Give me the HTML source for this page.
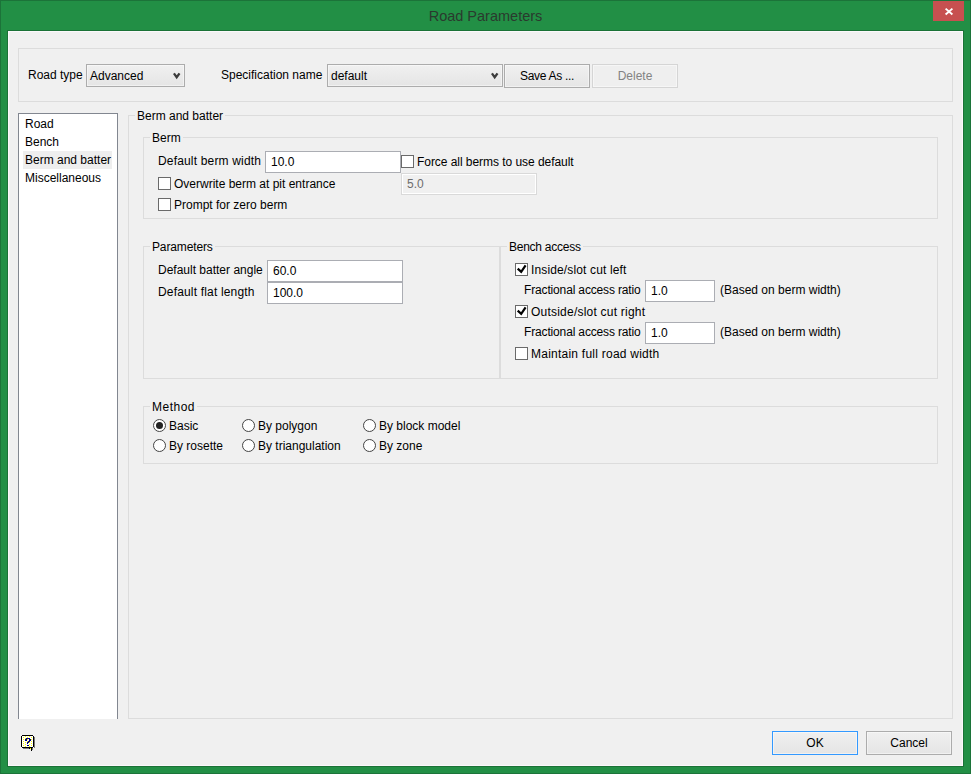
<!DOCTYPE html>
<html><head><meta charset="utf-8">
<style>
html,body{margin:0;padding:0}
body{width:971px;height:774px;position:relative;overflow:hidden;background:#228f45;font-family:"Liberation Sans",sans-serif;font-size:12px;color:#000}
div{box-sizing:border-box}
.a{position:absolute}
.t{position:absolute;white-space:nowrap;line-height:16px;font-size:12px}
.frame{position:absolute;left:0;top:0;width:971px;height:774px;border:1px solid #1c7339}
.content{position:absolute;left:7px;top:30px;width:957px;height:737px;border:1px solid #1a7236;}
.content2{position:absolute;left:8px;top:31px;width:955px;height:735px;border:1px solid #fbf8fb;background:#f0f0f0}
.close{position:absolute;left:933px;top:1px;width:31px;height:20px;background:#c75050}
.grp{position:absolute;border:1px solid #dcdcdc}
.gt{position:absolute;white-space:nowrap;line-height:16px;font-size:12px;background:#f0f0f0;padding:0 2px}
.edit{position:absolute;border:1px solid #abadb3;background:#fff}
.cb{position:absolute;width:13px;height:13px;border:1px solid #6a6a6a;background:#fff}
.rb{position:absolute;width:13px;height:13px;border:1px solid #444;border-radius:50%;background:#fff}
.btn{position:absolute;border:1px solid #acacac;background:linear-gradient(#f0f0f0,#e5e5e5);box-shadow:inset 0 0 0 1px rgba(255,255,255,.45)}
.combo{position:absolute;border:1px solid #acacac;background:linear-gradient(#f0f0f0,#e5e5e5);box-shadow:inset 0 0 0 1px rgba(255,255,255,.45)}
</style></head><body>
<div class="frame"></div>
<div class="t" style="left:0;width:971px;top:7px;text-align:center;font-size:14.5px;line-height:18px;color:#2a3a2e">Road Parameters</div>
<div class="close"><svg width="31" height="20" style="position:absolute;left:0;top:0"><path d="M12.6 7.6 L19.4 13.5 M19.4 7.6 L12.6 13.5" stroke="#fff" stroke-width="1.9"/></svg></div>
<div class="content"></div>
<div class="content2"></div>

<!-- top group -->
<div class="grp" style="left:18px;top:48px;width:935px;height:54px"></div>
<div class="t" style="left:28px;top:67px">Road type</div>
<div class="combo" style="left:86px;top:64px;width:99px;height:23px"></div>
<div class="t" style="left:90px;top:68px">Advanced</div>
<svg class="a" style="left:173px;top:72px" width="9" height="8"><polyline points="0.9,1.4 3.7,5.2 6.5,1.4" stroke="#3c3c3c" stroke-width="2.3" fill="none"/></svg>
<div class="t" style="left:221px;top:67px">Specification name</div>
<div class="combo" style="left:327px;top:64px;width:176px;height:23px"></div>
<div class="t" style="left:331px;top:68px">default</div>
<svg class="a" style="left:491px;top:72px" width="9" height="8"><polyline points="0.9,1.4 3.7,5.2 6.5,1.4" stroke="#3c3c3c" stroke-width="2.3" fill="none"/></svg>
<div class="btn" style="left:504px;top:64px;width:86px;height:24px"></div>
<div class="t" style="left:504px;width:86px;text-align:center;top:68px;letter-spacing:-0.3px">Save As ...</div>
<div class="btn" style="left:592px;top:64px;width:86px;height:24px;border-color:#d5d5d5;background:#efefef"></div>
<div class="t" style="left:592px;width:86px;text-align:center;top:68px;color:#838383">Delete</div>

<!-- list -->
<div class="a" style="left:18px;top:113px;width:100px;height:606px;background:#fff;border:1px solid #828790;border-bottom:none"></div>
<div class="a" style="left:23px;top:151px;width:89px;height:18px;background:#eeeeee"></div>
<div class="t" style="left:25px;top:116px">Road</div>
<div class="t" style="left:25px;top:134px">Bench</div>
<div class="t" style="left:25px;top:152px">Berm and batter</div>
<div class="t" style="left:25px;top:170px">Miscellaneous</div>

<!-- main panel -->
<div class="grp" style="left:128px;top:115px;width:825px;height:604px"></div>
<div class="gt" style="left:135px;top:108px">Berm and batter</div>

<!-- Berm -->
<div class="grp" style="left:143px;top:137px;width:795px;height:82px"></div>
<div class="gt" style="left:150px;top:130px">Berm</div>
<div class="t" style="left:158px;top:153px;letter-spacing:0.17px">Default berm width</div>
<div class="edit" style="left:265px;top:151px;width:136px;height:22px"></div>
<div class="t" style="left:271px;top:154px">10.0</div>
<div class="cb" style="left:401px;top:155px"></div>
<div class="t" style="left:417px;top:154px;letter-spacing:-0.05px">Force all berms to use default</div>
<div class="cb" style="left:158px;top:177px"></div>
<div class="t" style="left:174px;top:176px">Overwrite berm at pit entrance</div>
<div class="edit" style="left:401px;top:173px;width:136px;height:22px;background:#f0f0f0;border-color:#d9d9d9;box-shadow:inset 0 0 0 1px #fff"></div>
<div class="t" style="left:407px;top:176px;color:#6d6d6d">5.0</div>
<div class="cb" style="left:158px;top:198px"></div>
<div class="t" style="left:174px;top:197px">Prompt for zero berm</div>

<!-- Parameters -->
<div class="grp" style="left:143px;top:246px;width:357px;height:133px"></div>
<div class="gt" style="left:150px;top:239px;letter-spacing:-0.13px">Parameters</div>
<div class="t" style="left:158px;top:262px">Default batter angle</div>
<div class="edit" style="left:267px;top:260px;width:136px;height:22px"></div>
<div class="t" style="left:273px;top:263px">60.0</div>
<div class="t" style="left:158px;top:284px;letter-spacing:0.17px">Default flat length</div>
<div class="edit" style="left:267px;top:282px;width:136px;height:22px"></div>
<div class="t" style="left:273px;top:285px">100.0</div>

<!-- Bench access -->
<div class="grp" style="left:500px;top:246px;width:438px;height:133px"></div>
<div class="gt" style="left:507px;top:239px;letter-spacing:-0.25px">Bench access</div>
<div class="cb" style="left:515px;top:263px"></div><svg class="a" style="left:515px;top:263px" width="13" height="13"><path d="M2.7 5.6 L6.2 8.8 L10.6 2.3" stroke="#000" stroke-width="2.2" fill="none"/></svg>
<div class="t" style="left:531px;top:262px;letter-spacing:0.14px">Inside/slot cut left</div>
<div class="t" style="left:524px;top:282px;letter-spacing:-0.15px">Fractional access ratio</div>
<div class="edit" style="left:645px;top:280px;width:70px;height:22px"></div>
<div class="t" style="left:651px;top:283px">1.0</div>
<div class="t" style="left:720px;top:282px">(Based on berm width)</div>
<div class="cb" style="left:515px;top:305px"></div><svg class="a" style="left:515px;top:305px" width="13" height="13"><path d="M2.7 5.6 L6.2 8.8 L10.6 2.3" stroke="#000" stroke-width="2.2" fill="none"/></svg>
<div class="t" style="left:531px;top:304px;letter-spacing:0.22px">Outside/slot cut right</div>
<div class="t" style="left:524px;top:324px;letter-spacing:-0.15px">Fractional access ratio</div>
<div class="edit" style="left:645px;top:322px;width:70px;height:22px"></div>
<div class="t" style="left:651px;top:325px">1.0</div>
<div class="t" style="left:720px;top:324px">(Based on berm width)</div>
<div class="cb" style="left:515px;top:347px"></div>
<div class="t" style="left:531px;top:346px;letter-spacing:0.24px">Maintain full road width</div>

<!-- Method -->
<div class="grp" style="left:143px;top:406px;width:795px;height:58px"></div>
<div class="gt" style="left:150px;top:399px;letter-spacing:0.5px">Method</div>
<div class="rb" style="left:153px;top:419px"></div><div class="a" style="left:156px;top:422px;width:7px;height:7px;border-radius:50%;background:#222"></div>
<div class="t" style="left:169px;top:418px">Basic</div>
<div class="rb" style="left:242px;top:419px"></div>
<div class="t" style="left:258px;top:418px">By polygon</div>
<div class="rb" style="left:363px;top:419px"></div>
<div class="t" style="left:379px;top:418px">By block model</div>
<div class="rb" style="left:153px;top:439px"></div>
<div class="t" style="left:169px;top:438px">By rosette</div>
<div class="rb" style="left:242px;top:439px"></div>
<div class="t" style="left:258px;top:438px">By triangulation</div>
<div class="rb" style="left:363px;top:439px"></div>
<div class="t" style="left:379px;top:438px">By zone</div>

<!-- bottom -->
<svg class="a" style="left:18px;top:732px" width="18" height="20" shape-rendering="crispEdges"><rect x="4" y="4" width="11" height="11" fill="#fff"/><rect x="4" y="3" width="11" height="1" fill="#000"/><rect x="3" y="4" width="1" height="11" fill="#000"/><rect x="15" y="4" width="1" height="11" fill="#000"/><rect x="4" y="15" width="7" height="1" fill="#000"/><rect x="16" y="5" width="1" height="11" fill="#7a7a7a"/><rect x="5" y="16" width="6" height="1" fill="#7a7a7a"/><rect x="11" y="15" width="1" height="1" fill="#000"/><rect x="12" y="15" width="1" height="1" fill="#000"/><rect x="13" y="15" width="1" height="1" fill="#000"/><rect x="14" y="15" width="1" height="1" fill="#000"/><rect x="11" y="16" width="1" height="1" fill="#000"/><rect x="12" y="16" width="1" height="1" fill="#ffff00"/><rect x="13" y="16" width="1" height="1" fill="#000"/><rect x="13" y="17" width="1" height="1" fill="#000"/><rect x="13" y="18" width="1" height="1" fill="#000"/><rect x="14" y="16" width="1" height="1" fill="#7a7a7a"/><rect x="14" y="17" width="1" height="1" fill="#7a7a7a"/><rect x="5" y="5" width="1" height="1" fill="#ffff00"/><rect x="5" y="7" width="1" height="1" fill="#ffff00"/><rect x="5" y="9" width="1" height="1" fill="#ffff00"/><rect x="5" y="11" width="1" height="1" fill="#ffff00"/><rect x="5" y="13" width="1" height="1" fill="#ffff00"/><rect x="9" y="5" width="1" height="1" fill="#ffff00"/><rect x="9" y="7" width="1" height="1" fill="#ffff00"/><rect x="9" y="9" width="1" height="1" fill="#ffff00"/><rect x="9" y="11" width="1" height="1" fill="#ffff00"/><rect x="9" y="13" width="1" height="1" fill="#ffff00"/><rect x="13" y="5" width="1" height="1" fill="#ffff00"/><rect x="13" y="7" width="1" height="1" fill="#ffff00"/><rect x="13" y="9" width="1" height="1" fill="#ffff00"/><rect x="13" y="11" width="1" height="1" fill="#ffff00"/><rect x="13" y="13" width="1" height="1" fill="#ffff00"/><rect x="7" y="4" width="1" height="1" fill="#ffff00"/><rect x="7" y="6" width="1" height="1" fill="#ffff00"/><rect x="7" y="8" width="1" height="1" fill="#ffff00"/><rect x="7" y="10" width="1" height="1" fill="#ffff00"/><rect x="7" y="12" width="1" height="1" fill="#ffff00"/><rect x="7" y="14" width="1" height="1" fill="#ffff00"/><rect x="11" y="4" width="1" height="1" fill="#ffff00"/><rect x="11" y="6" width="1" height="1" fill="#ffff00"/><rect x="11" y="8" width="1" height="1" fill="#ffff00"/><rect x="11" y="10" width="1" height="1" fill="#ffff00"/><rect x="11" y="12" width="1" height="1" fill="#ffff00"/><rect x="11" y="14" width="1" height="1" fill="#ffff00"/><rect x="8" y="6" width="1" height="1" fill="#000080"/><rect x="9" y="6" width="1" height="1" fill="#000080"/><rect x="10" y="6" width="1" height="1" fill="#000080"/><rect x="11" y="6" width="1" height="1" fill="#000080"/><rect x="7" y="7" width="1" height="1" fill="#000080"/><rect x="8" y="7" width="1" height="1" fill="#000080"/><rect x="11" y="7" width="1" height="1" fill="#000080"/><rect x="12" y="7" width="1" height="1" fill="#000080"/><rect x="7" y="8" width="1" height="1" fill="#000080"/><rect x="8" y="8" width="1" height="1" fill="#000080"/><rect x="11" y="8" width="1" height="1" fill="#000080"/><rect x="12" y="8" width="1" height="1" fill="#000080"/><rect x="10" y="9" width="1" height="1" fill="#000080"/><rect x="11" y="9" width="1" height="1" fill="#000080"/><rect x="9" y="10" width="1" height="1" fill="#000080"/><rect x="10" y="10" width="1" height="1" fill="#000080"/><rect x="9" y="11" width="1" height="1" fill="#000080"/><rect x="9" y="13" width="1" height="1" fill="#000080"/><rect x="10" y="13" width="1" height="1" fill="#000080"/></svg>
<div class="btn" style="left:772px;top:731px;width:86px;height:24px;border-color:#3399ff"></div>
<div class="t" style="left:772px;width:86px;text-align:center;top:735px">OK</div>
<div class="btn" style="left:866px;top:731px;width:86px;height:24px"></div>
<div class="t" style="left:866px;width:86px;text-align:center;top:735px">Cancel</div>

</body></html>
